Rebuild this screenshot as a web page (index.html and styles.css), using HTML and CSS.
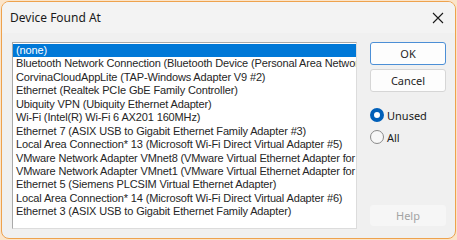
FILE: index.html
```html
<!DOCTYPE html>
<html lang="en">
<head>
    <meta charset="UTF-8">
    <title>Device Found At</title>
    <link rel="stylesheet" href="styles.css">
</head>
<body>
    <div class="dialog">
        <div class="title-bar">
            <span class="title">Device Found At</span>
            <svg class="close" width="12" height="12" viewBox="0 0 12 12">
                <path d="M1 1 L11 11 M11 1 L1 11" stroke="#1a1a1a" stroke-width="1.1" fill="none"/>
            </svg>
        </div>

        <div class="content">
            <ul class="device-list">
                <li class="selected">(none)</li>
                <li>Bluetooth Network Connection (Bluetooth Device (Personal Area Network)</li>
                <li>CorvinaCloudAppLite (TAP-Windows Adapter V9 #2)</li>
                <li>Ethernet (Realtek PCIe GbE Family Controller)</li>
                <li>Ubiquity VPN (Ubiquity Ethernet Adapter)</li>
                <li>Wi-Fi (Intel(R) Wi-Fi 6 AX201 160MHz)</li>
                <li>Ethernet 7 (ASIX USB to Gigabit Ethernet Family Adapter #3)</li>
                <li>Local Area Connection* 13 (Microsoft Wi-Fi Direct Virtual Adapter #5)</li>
                <li>VMware Network Adapter VMnet8 (VMware Virtual Ethernet Adapter for VMnet8)</li>
                <li>VMware Network Adapter VMnet1 (VMware Virtual Ethernet Adapter for VMnet1)</li>
                <li>Ethernet 5 (Siemens PLCSIM Virtual Ethernet Adapter)</li>
                <li>Local Area Connection* 14 (Microsoft Wi-Fi Direct Virtual Adapter #6)</li>
                <li>Ethernet 3 (ASIX USB to Gigabit Ethernet Family Adapter)</li>
            </ul>

            <div class="side">
                <button class="btn default">OK</button>
                <button class="btn">Cancel</button>

                <div class="radios">
                    <label class="radio checked"><span class="dot"></span>Unused</label>
                    <label class="radio"><span class="dot"></span>All</label>
                </div>

                <button class="btn disabled">Help</button>
            </div>
        </div>
    </div>
</body>
</html>
```

FILE: styles.css
```css
/* Base */
* {
    margin: 0;
    padding: 0;
    box-sizing: border-box;
}

body {
    background-color: #fbe4c9;
    font-family: 'Liberation Sans', Arial, sans-serif;
    font-size: 11px;
    color: #1a1a1a;
}

/* Window */
.dialog {
    margin: 1px;
    width: 455px;
    height: 238px;
    background: #f0f0f0;
    border: 1px solid #eea24d;
    border-radius: 8px;
    display: flex;
    flex-direction: column;
    overflow: hidden;
}

.title-bar {
    height: 31px;
    display: flex;
    align-items: center;
    justify-content: space-between;
    padding: 0 11px 0 8px;
    background: #f3f3f3;
}

.title {
    font-family: 'Noto Sans', sans-serif;
    font-size: 12px;
    color: #1a1a1a;
}

.close {
    display: block;
}

/* Main area */
.content {
    display: flex;
    gap: 13px;
    padding: 9px 8px 0 10px;
}

.device-list {
    list-style: none;
    width: 345px;
    height: 187px;
    background: #fff;
    border: 1px solid #a9a9a9;
    border-right-color: #dcdcdc;
    border-bottom-color: #dcdcdc;
    padding-top: 1px;
    overflow: hidden;
}

.device-list li {
    height: 13.45px;
    line-height: 13px;
    padding-left: 3px;
    white-space: nowrap;
    overflow: hidden;
    letter-spacing: -0.14px;
    color: #262626;
}

.device-list li.selected {
    background: #0078d7;
    color: #fff;
}

/* Buttons and options */
.side {
    width: 76px;
    height: 186px;
    display: flex;
    flex-direction: column;
    padding-bottom: 2px;
}

.btn {
    height: 23px;
    font-family: 'Noto Sans', sans-serif;
    font-size: 11px;
    color: #262626;
    background: #fdfdfd;
    border: 1px solid #d6d6d6;
    border-radius: 3px;
    margin-bottom: 4px;
}

.btn.default {
    border-color: #4c8fd6;
}

.btn.disabled {
    margin-top: auto;
    margin-bottom: 0;
    height: 21px;
    color: #a3a3a3;
    background: #f6f6f6;
    border-color: #f6f6f6;
}

.radios {
    margin-top: 12px;
    display: flex;
    flex-direction: column;
    gap: 8px;
}

.radio {
    display: flex;
    align-items: center;
    gap: 3px;
    height: 14px;
    font-family: 'Noto Sans', sans-serif;
    font-size: 11px;
}

.dot {
    width: 14px;
    height: 14px;
    border-radius: 50%;
    border: 1px solid #8a8a8a;
    background: #f7f7f7;
}

.radio.checked .dot {
    border: 4px solid #005fb8;
    background: #fff;
}
```
